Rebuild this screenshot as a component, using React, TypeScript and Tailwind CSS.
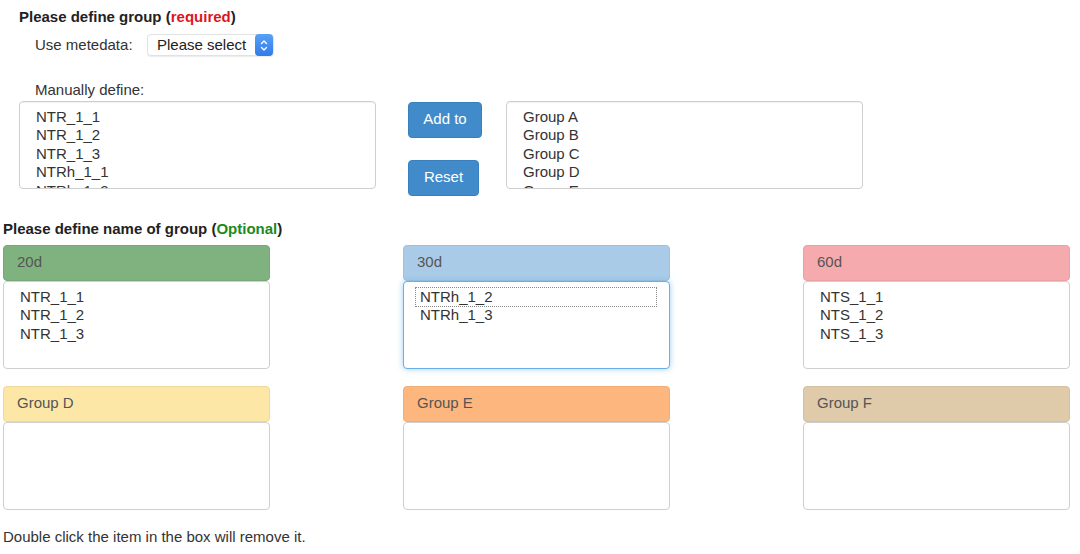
import * as React from 'react';

type Group = { name: string; header: string; items: string[]; focused?: boolean };

const groups: Group[] = [
  { name: '20d', header: 'bg-[#80b27f] border-[#78a878]', items: ['NTR_1_1', 'NTR_1_2', 'NTR_1_3'] },
  { name: '30d', header: 'bg-[#aacbe8] border-[#9fc1df]', items: ['NTRh_1_2', 'NTRh_1_3'], focused: true },
  { name: '60d', header: 'bg-[#f5aaad] border-[#eba0a3]', items: ['NTS_1_1', 'NTS_1_2', 'NTS_1_3'] },
  { name: 'Group D', header: 'bg-[#fce7a7] border-[#efd99a]', items: [] },
  { name: 'Group E', header: 'bg-[#fdb77e] border-[#f2ad74]', items: [] },
  { name: 'Group F', header: 'bg-[#dfcaa9] border-[#d4bf9e]', items: [] },
];

const samples = ['NTR_1_1', 'NTR_1_2', 'NTR_1_3', 'NTRh_1_1', 'NTRh_1_2', 'NTRh_1_3'];
const groupNames = ['Group A', 'Group B', 'Group C', 'Group D', 'Group E', 'Group F'];

const Stepper: React.FC = () => (
  <span className="flex h-[22px] w-[18px] items-center justify-center rounded-[4px] bg-gradient-to-b from-[#5aa0f7] to-[#2f7bea]">
    <svg width="8" height="13" viewBox="0 0 8 13" fill="none" stroke="white" strokeWidth="1.4" strokeLinecap="round" strokeLinejoin="round">
      <path d="M1.5 4.5 L4 2 L6.5 4.5" />
      <path d="M1.5 8.5 L4 11 L6.5 8.5" />
    </svg>
  </span>
);

const ListBox: React.FC<{ items: string[]; className?: string }> = ({ items, className }) => (
  <div className={`h-[88px] overflow-hidden rounded-[4px] border border-[#cfcfcf] bg-white pt-[6px] shadow-[inset_0_1px_1px_rgba(0,0,0,0.06)] ${className ?? ''}`}>
    {items.map((it) => (
      <div key={it} className="whitespace-nowrap leading-[18.5px]">{it}</div>
    ))}
  </div>
);

const GroupCard: React.FC<{ g: Group }> = ({ g }) => (
  <div className="flex w-[267px] flex-col">
    <div className={`flex h-[36px] items-center rounded-[4px] border px-[13px] text-[#555] ${g.header}`}>
      {g.name}
    </div>
    <div
      className={`h-[88px] rounded-[4px] border bg-white pl-[16px] pr-[13px] pt-[6px] ${
        g.focused ? 'border-[#66afe9] shadow-[0_0_6px_rgba(102,175,233,0.6)]' : 'border-[#cfcfcf]'
      }`}
    >
      {g.items.map((it, i) => (
        <div
          key={it}
          className={`leading-[18.5px] ${i === 0 && g.focused ? '-ml-[4px] pl-[4px] outline outline-1 outline-dotted outline-[#888]' : ''}`}
        >
          {it}
        </div>
      ))}
    </div>
  </div>
);

const App: React.FC = () => {
  return (
    <div className="h-[554px] w-[1080px] overflow-hidden bg-white text-[15px] text-[#333] [font-family:'Liberation_Sans',Arial,sans-serif]">
      <div className="pl-[19px] pt-[8px]">
        <div className="font-bold text-[#222] leading-[18px]">
          Please define group (<span className="text-[#e0141e]">required</span>)
        </div>
        <div className="mt-[8px] flex items-center pl-[16px]">
          <span className="w-[112px]">Use metedata:</span>
          <div className="flex h-[22px] w-[127px] items-center justify-between rounded-[4px] border border-[#e2e2e2] bg-white pl-[9px] shadow-[0_1px_1px_rgba(0,0,0,0.08)]">
            <span className="text-[#222]">Please select</span>
            <Stepper />
          </div>
        </div>
        <div className="mt-[24px] pl-[16px] leading-[18px]">Manually define:</div>
        <div className="mt-[2px] flex items-start">
          <ListBox items={samples} className="w-[357px] pl-[16px]" />
          <div className="ml-[32px] flex flex-col gap-[22px] pt-[1px]">
            <button className="h-[36px] w-[74px] rounded-[4px] border border-[#3a80bd] bg-[#428bca] text-white">Add to</button>
            <button className="h-[36px] w-[71px] rounded-[4px] border border-[#3a80bd] bg-[#428bca] text-white">Reset</button>
          </div>
          <ListBox items={groupNames} className="ml-[24px] w-[357px] pl-[16px]" />
        </div>
      </div>

      <div className="px-[3px]">
        <div className="mt-[24px] font-bold text-[#222] leading-[18px]">
          Please define name of group (<span className="text-[#1c8a1c]">Optional</span>)
        </div>
        <div className="mt-[7px] grid grid-cols-[267px_267px_267px] gap-x-[133px] gap-y-[17px]">
          {groups.map((g) => (
            <GroupCard key={g.name} g={g} />
          ))}
        </div>
        <div className="mt-[18px] leading-[18px]">Double click the item in the box will remove it.</div>
      </div>
    </div>
  );
};

export default App;
